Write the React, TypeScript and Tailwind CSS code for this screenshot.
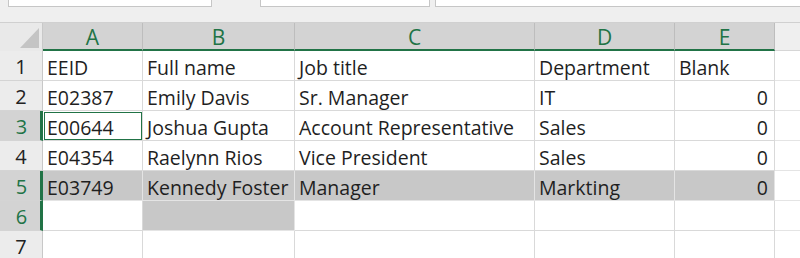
import React from "react";

const COLS = ["A", "B", "C", "D", "E"];
const WIDTHS = ["w-[100px]", "w-[152px]", "w-[240px]", "w-[140px]", "w-[100px]"];

const ROWS: string[][] = [
  ["EEID", "Full name", "Job title", "Department", "Blank"],
  ["E02387", "Emily Davis", "Sr. Manager", "IT", "0"],
  ["E00644", "Joshua Gupta", "Account Representative", "Sales", "0"],
  ["E04354", "Raelynn Rios", "Vice President", "Sales", "0"],
  ["E03749", "Kennedy Foster", "Manager", "Markting", "0"],
  ["", "", "", "", ""],
  ["", "", "", "", ""],
];

// rows (1-based) whose header is highlighted
const SELECTED_ROWS = [3, 5, 6];

function isGrey(r: number, c: number) {
  if (r === 5) return true;
  if (r === 6 && c === 1) return true;
  return false;
}

export default function App() {
  return (
    <div className="w-[800px] h-[258px] overflow-hidden bg-white font-['Open_Sans','Liberation_Sans',sans-serif] text-[#1f1f1f]">
      {/* Formula bar strip */}
      <div className="h-[23px] bg-[#efefef] flex items-start border-b border-[#d0d0d0]">
        <div className="ml-[8px] w-[204px] h-[7px] bg-white border border-t-0 border-[#c6c6c6]" />
        <div className="ml-[48px] w-[170px] h-[7px] bg-white border border-t-0 border-[#c6c6c6]" />
        <div className="ml-[5px] flex-1 h-[7px] bg-white border border-t-0 border-r-0 border-[#c6c6c6]" />
      </div>

      {/* Column headers */}
      <div className="flex h-[28px]">
        <div className="w-[43px] h-full bg-[#e9e9e9] border-r border-[#c8c8c8] relative">
          <svg className="absolute left-[20px] top-[5px]" width="19" height="20" viewBox="0 0 19 20">
            <polygon points="19,0 19,20 0,20" fill="#c4c4c4" />
          </svg>
        </div>
        {COLS.map((c, i) => (
          <div
            key={c}
            className={`${WIDTHS[i]} h-full bg-[#d3d3d3] border-r border-[#bdbdbd] border-b-2 border-b-[#217346] flex items-center justify-center text-[21px] text-[#217346] leading-none pt-[2px]`}
          >
            {c}
          </div>
        ))}
        <div className="flex-1 h-full bg-[#efefef] border-b border-[#d6d6d6]" />
      </div>

      {/* Data rows */}
      {ROWS.map((row, ri) => {
        const r = ri + 1;
        const sel = SELECTED_ROWS.includes(r);
        return (
          <div key={r} className="flex h-[30px]">
            <div
              className={`w-[43px] h-full flex items-center justify-center text-[20px] pt-[2px] border-b border-[#d4d4d4] ${
                sel
                  ? "bg-[#d3d3d3] text-[#217346] border-r-[3px] border-r-[#217346] pl-[3px]"
                  : "bg-[#ececec] text-[#222] border-r border-r-[#c8c8c8]"
              }`}
            >
              {r}
            </div>
            {row.map((v, ci) => {
              const grey = isGrey(r, ci);
              const active = r === 3 && ci === 0;
              const num = ci === 4 && r > 1;
              return (
                <div
                  key={ci}
                  className={`${WIDTHS[ci]} h-full border-r border-b flex items-end text-[19.5px] leading-[25px] whitespace-nowrap overflow-hidden ${
                    grey ? "bg-[#c8c8c8] border-[#e4e4e4]" : "bg-white border-[#d9d9d9]"
                  } ${num ? "justify-end pr-[6px]" : "pl-[4px]"} ${
                    active ? "outline outline-1 outline-[#217346] -outline-offset-[2px]" : ""
                  }`}
                >
                  {v}
                </div>
              );
            })}
            <div className="flex-1 h-full border-b border-[#e4e4e4] bg-white" />
          </div>
        );
      })}
    </div>
  );
}
